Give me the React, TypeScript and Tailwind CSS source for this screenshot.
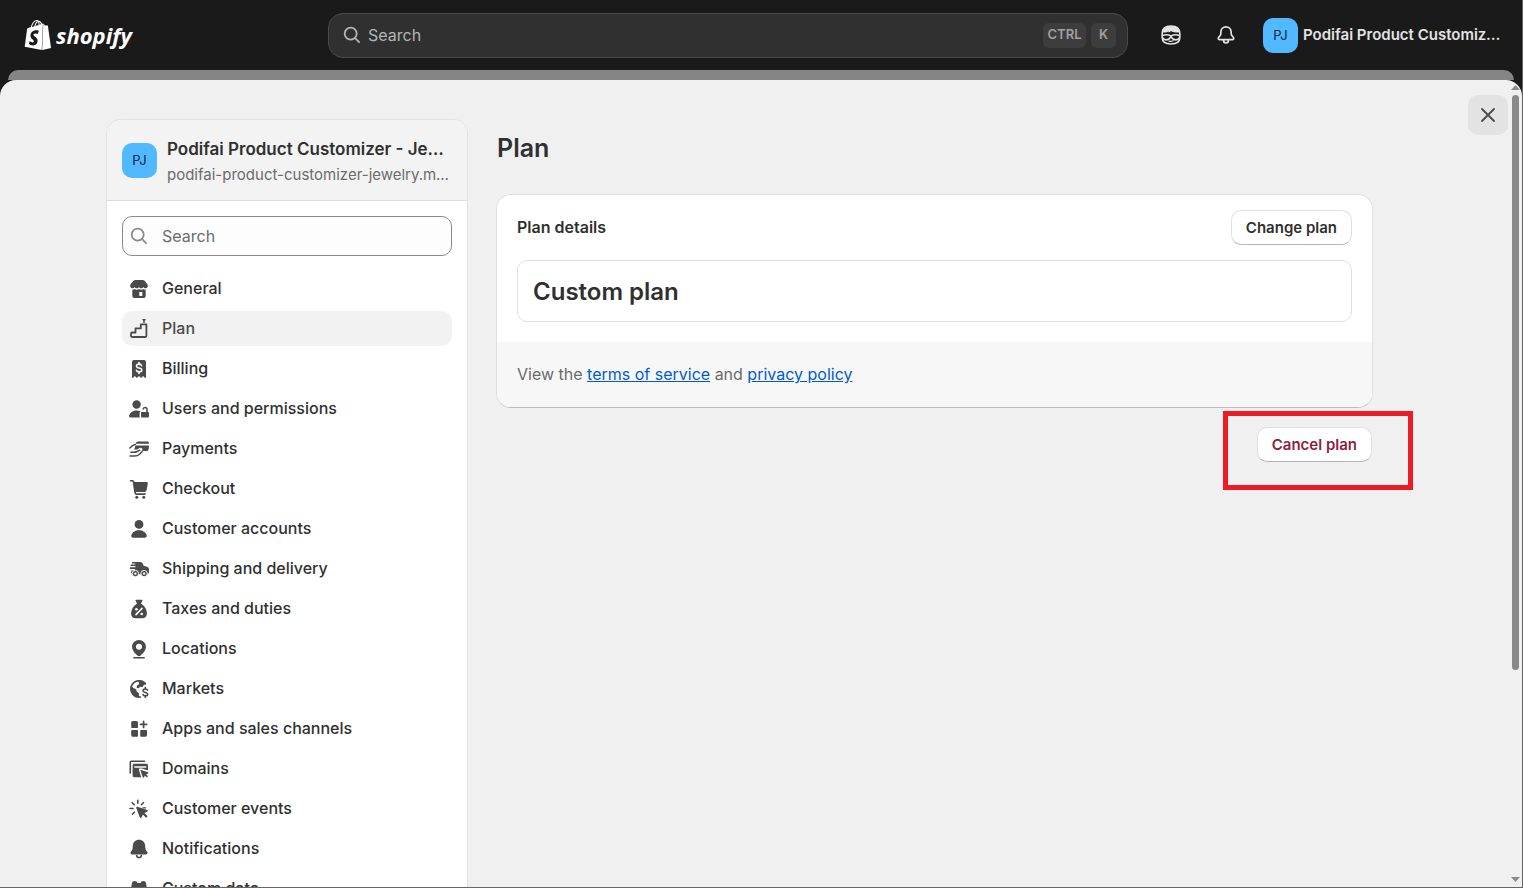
import { FC, ReactNode } from 'react';
import { SiShopify } from 'react-icons/si';

type NavItem = {
  label: string;
  icon: ReactNode;
  active?: boolean;
};

type IconProps = {
  children: ReactNode;
};

const Icon: FC<IconProps> = ({ children }) => (
  <svg
    viewBox="0 0 20 20"
    className="size-5 shrink-0"
    fill="currentColor"
    aria-hidden="true"
  >
    {children}
  </svg>
);

const SearchIcon: FC = () => (
  <Icon>
    <g fill="none" stroke="currentColor" strokeWidth="1.8" strokeLinecap="round">
      <circle cx="8.7" cy="8.7" r="6" />
      <path d="m13.1 13.1 4 4" />
    </g>
  </Icon>
);

const navItems: NavItem[] = [
  {
    label: 'General',
    icon: (
      <Icon>
        <path d="M6.5 1h7c.9 0 1.700.3 2.300 1l2.600 3.300c1.100 1.500.2 3.600-1.600 3.900-1.200.1-2-.5-2.400-1.300-.4.800-1.200 1.400-2.200 1.400S10.400 8.700 10 7.900c-.4.800-1.200 1.400-2.200 1.400S6 8.700 5.600 7.900c-.4.800-1.200 1.400-2.400 1.300-1.800-.3-2.700-2.400-1.600-3.900L4.200 2c.6-.7 1.400-1 2.300-1Z" />
        <path
          fillRule="evenodd"
          d="M3.300 10.700c1 0 1.700-.2 2.300-.6.700.500 1.400.700 2.200.700s1.600-.3 2.200-.7c.6.400 1.400.7 2.200.7s1.500-.2 2.200-.7c.6.400 1.300.6 2.300.6V17a2 2 0 0 1-2 2H5.300a2 2 0 0 1-2-2v-6.300Zm7 2.300v4h3v-4h-3Z"
        />
      </Icon>
    ),
  },
  {
    label: 'Plan',
    active: true,
    icon: (
      <Icon>
        <path
          d="M3.200 18h13c.7 0 1.200-.5 1.200-1.200V5.400h-5.600v4H6.500v4.100H3.200c-.7 0-1.200.5-1.200 1.200v2.100c0 .7.5 1.200 1.200 1.200Z"
          fill="none"
          stroke="currentColor"
          strokeWidth="1.800"
          strokeLinejoin="round"
        />
        <path d="M13 0h4l-1.300 2V4h-1.400V2L13 0Z" />
      </Icon>
    ),
  },
  {
    label: 'Billing',
    icon: (
      <Icon>
        <path d="M5 1h10a2 2 0 0 1 2 2v15.300c0 .6-.7.9-1.100.5L14.200 17l-2.100 1.900L10 17l-2.100 1.900L5.800 17l-1.700 1.800c-.4.4-1.100.1-1.100-.5V3a2 2 0 0 1 2-2Z" />
        <path
          d="M12.600 6.700c-.3-1-1.200-1.600-2.500-1.600-1.500 0-2.600.7-2.600 1.900 0 2.900 5.300 1.200 5.300 4 0 1.200-1.200 1.900-2.700 1.900-1.400 0-2.400-.6-2.700-1.700M10 3.600v1.500m0 7.800v1.500"
          fill="none"
          stroke="#fff"
          strokeWidth="1.600"
          strokeLinecap="round"
        />
      </Icon>
    ),
  },
  {
    label: 'Users and permissions',
    icon: (
      <Icon>
        <circle cx="7.600" cy="5.500" r="4.200" />
        <path d="M7.600 11.500c1.500 0 2.800.3 3.900.8-.6.600-.9 1.300-.9 2.100v4.100H1.500c-.9 0-1.600-.8-1.400-1.700.7-3.200 3.800-5.300 7.500-5.300Z" />
        <path d="M13.200 12.900h5.600c.7 0 1.200.5 1.200 1.200v2.800c0 1-.8 1.700-1.700 1.700h-4.600c-1 0-1.700-.8-1.700-1.700v-2.800c0-.7.5-1.200 1.200-1.200Z" />
        <path
          d="M14.200 9.900c.2-.9 1-1.500 1.900-1.500 1.100 0 1.900.9 1.900 1.900V13"
          fill="none"
          stroke="currentColor"
          strokeWidth="1.500"
          strokeLinecap="round"
        />
      </Icon>
    ),
  },
  {
    label: 'Payments',
    icon: (
      <Icon>
        <path d="M9.300 2.600h9.200c.9 0 1.500.6 1.500 1.500v.7H6.600c.5-1.300 1.400-2.200 2.700-2.200Z" />
        <path d="M6.500 6.400H20l-.4 3.800c-.2 1.200-1 1.900-2.200 1.900h-4.200c.4-.9.4-1.800-.2-2.500-.7-.9-1.800-.9-2.800-.4L8 10.500H5.200l1.300-4.100Z" />
        <path
          d="M.9 9C2.300 7 4.200 5.600 6.300 5.400M1 17.100h4.600c2.200 0 3.600-.6 5.200-2.100l2.400-2.600"
          fill="none"
          stroke="currentColor"
          strokeWidth="1.500"
          strokeLinecap="round"
        />
        <path
          d="M1.800 13.300h2.400c1.600 0 2.700-.2 3.900-.8l2.700-1.300"
          fill="none"
          stroke="currentColor"
          strokeWidth="1.400"
          strokeLinecap="round"
        />
      </Icon>
    ),
  },
  {
    label: 'Checkout',
    icon: (
      <Icon>
        <path d="M1.500 1h1.800c1 0 1.800.7 2 1.600l.1.500h12.200c.8 0 1.400.7 1.200 1.500l-1.100 6.100c-.3 1.400-1.400 2.300-2.800 2.300H6.800l.1.700c.1.400.4.600.8.600h8.400c.5 0 .8.400.8.800s-.3.800-.8.800H7.700c-1.200 0-2.200-.8-2.400-2L3.700 3c0-.3-.2-.4-.5-.4H1.500a.8.8 0 0 1 0-1.600Z" />
        <circle cx="7.800" cy="18.300" r="1.500" />
        <circle cx="14.800" cy="18.300" r="1.500" />
      </Icon>
    ),
  },
  {
    label: 'Customer accounts',
    icon: (
      <Icon>
        <circle cx="10" cy="5.400" r="4.400" />
        <path d="M10 11.300c3.800 0 6.800 2 7.700 5 .4 1.300-.6 2.500-1.900 2.500H4.200c-1.300 0-2.300-1.200-1.900-2.500.9-3 3.900-5 7.700-5Z" />
      </Icon>
    ),
  },
  {
    label: 'Shipping and delivery',
    icon: (
      <Icon>
        <path d="M3 3h8.200c1.300 0 2.400.8 2.800 2l.6 1.800 3.400 1c1.200.4 2 1.500 2 2.800v2.300c0 1.200-.8 2.100-2 2.300H3.700c-1-.1-1.500-.9-1.500-1.800v-2h3.600v-1.500H.9V8.300h5.500V6.900H1.700V5.500h4.600V4.500H3V3Z" />
        <g fill="currentColor" stroke="#fff" strokeWidth="1">
          <circle cx="6.400" cy="14.600" r="3.200" />
          <circle cx="15.100" cy="14.600" r="3.200" />
        </g>
        <circle cx="6.400" cy="14.600" r="1.200" fill="#fff" />
        <circle cx="15.100" cy="14.600" r="1.200" fill="#fff" />
      </Icon>
    ),
  },
  {
    label: 'Taxes and duties',
    icon: (
      <Icon>
        <path d="M7.300.7h5.400c.7 0 1.100.8.7 1.400l-1.200 1.800v1.600H7.800V3.900L6.600 2.100C6.200 1.500 6.600.7 7.300.7Z" />
        <path d="M7.500 5h5c3.200 2 5.400 5.600 5.400 9.200 0 3.300-1.700 5.100-4.800 5.100H6.900c-3.100 0-4.800-1.800-4.800-5.100C2.100 10.600 4.300 7 7.500 5Z" />
        <path
          d="m7 15.600 6-6.200"
          fill="none"
          stroke="#fff"
          strokeWidth="1.600"
          strokeLinecap="round"
        />
        <circle cx="7.400" cy="10.300" r="1.300" fill="#fff" />
        <circle cx="12.700" cy="15" r="1.300" fill="#fff" />
      </Icon>
    ),
  },
  {
    label: 'Locations',
    icon: (
      <Icon>
        <path
          fillRule="evenodd"
          d="M10 1c3.900 0 6.900 3 6.900 6.700 0 3.900-2.800 6.300-5.200 8.800-1 1-2.400 1-3.400 0-2.400-2.500-5.200-4.900-5.200-8.800C3.100 4 6.100 1 10 1Zm0 9.800a3 3 0 1 0 0-6 3 3 0 0 0 0 6Z"
        />
        <path
          d="M4.800 18.700h10.400"
          stroke="currentColor"
          strokeWidth="1.500"
          strokeLinecap="round"
        />
      </Icon>
    ),
  },
  {
    label: 'Markets',
    icon: (
      <Icon>
        <path
          d="M16.400 4.600A8.200 8.200 0 1 0 11.500 18"
          fill="none"
          stroke="currentColor"
          strokeWidth="1.600"
          strokeLinecap="round"
        />
        <path d="M2 6.500 4.300 9l2.900 1.200.5 2.300 2.400 1.900-.3 4.200A9 9 0 0 1 2 6.500Z" />
        <path d="m9.200 1.300 4.300.5 3.500 3.400-2 .6-1.600 2.500-2.200-.5-1.600 1.500-1.900-.4.2-2.200 2.300-1.700-1-3.700Z" />
        <path
          d="M18.500 11.300c-.3-.9-1-1.300-2.200-1.300-1.300 0-2.200.7-2.200 1.700 0 2.500 4.600 1.100 4.600 3.500 0 1.100-1 1.700-2.400 1.700-1.200 0-2-.4-2.300-1.400M16.300 8.500V10m0 6.900v1.500"
          fill="none"
          stroke="currentColor"
          strokeWidth="1.600"
          strokeLinecap="round"
        />
      </Icon>
    ),
  },
  {
    label: 'Apps and sales channels',
    icon: (
      <Icon>
        <path d="M4 2h3.200C8.200 2 9 2.800 9 3.800v4.400c0 .4-.3.700-.7.700H2.900c-.4 0-.7-.3-.7-.7V3.800C2.200 2.800 3 2 4 2Z" />
        <path d="M2.900 11h5.400c.4 0 .7.300.7.700v5.400c0 .4-.3.700-.7.700H4c-1 0-1.800-.8-1.800-1.800v-4.300c0-.4.3-.7.7-.7Z" />
        <path d="M11.900 11h5.400c.4 0 .7.300.7.700V16c0 1-.8 1.800-1.800 1.800h-4.300c-.4 0-.7-.3-.7-.7v-5.400c0-.4.3-.7.7-.7Z" />
        <path
          d="M14.600 2.400v6M11.600 5.400h6"
          stroke="currentColor"
          strokeWidth="1.700"
          strokeLinecap="round"
        />
      </Icon>
    ),
  },
  {
    label: 'Domains',
    icon: (
      <Icon>
        <path
          d="M1.300 14V3.200c0-.6.3-.9.900-.9h13.300"
          fill="none"
          stroke="currentColor"
          strokeWidth="1.600"
          strokeLinecap="round"
        />
        <path
          fillRule="evenodd"
          d="M5.300 4.700h12c1 0 1.700.8 1.700 1.700v5.200l-7-2.300c-1.300-.4-2.400.7-2 2l2.300 6.900H5.300c-1 0-1.700-.8-1.700-1.700V6.400c0-1 .8-1.700 1.700-1.700Zm0 2.600v1.500h12V7.300h-12Z"
        />
        <path d="m12.100 10.900 6.900 2.400c.6.200.6 1 0 1.200l-1.900.8 1.900 1.900-1.200 1.200-1.900-1.900-.9 1.900c-.2.600-1 .5-1.200-.1l-2.400-6.700c-.2-.4.200-.8.700-.7Z" />
      </Icon>
    ),
  },
  {
    label: 'Customer events',
    icon: (
      <Icon>
        <path
          d="M8.800 1.200v3M3.200 3.700l2 2M1 9.500h3M3.400 15.200l2-2M14.400 3.700l-2 2"
          stroke="currentColor"
          strokeWidth="1.600"
          strokeLinecap="round"
        />
        <path d="m8.500 7.700 9.700 3.200c.8.300.8 1.400.1 1.700l-2.800 1.400 3.200 3.200-1.600 1.600-3.200-3.200-1.400 2.800c-.4.800-1.500.7-1.700-.1L7.300 8.900c-.3-.7.4-1.400 1.200-1.200Z" />
        <path
          d="M14 8.900h2.500"
          stroke="currentColor"
          strokeWidth="1.400"
          strokeLinecap="round"
        />
      </Icon>
    ),
  },
  {
    label: 'Notifications',
    icon: (
      <Icon>
        <path d="M10 .8c3.600 0 6 2.600 6.200 6l.2 2.800c.1.700.3 1.300.8 1.800l.9 1.100c1 1.200.2 3.100-1.400 3.100H3.300c-1.600 0-2.400-1.900-1.400-3.100l.9-1.100c.5-.5.7-1.100.8-1.800l.2-2.800c.2-3.400 2.600-6 6.200-6Z" />
        <path
          d="M7.600 16c0 1.500 1 2.600 2.400 2.600s2.400-1.100 2.400-2.600"
          fill="none"
          stroke="currentColor"
          strokeWidth="1.500"
        />
      </Icon>
    ),
  },
  {
    label: 'Custom data',
    icon: (
      <Icon>
        <path d="M5.500 2c1.600 0 2.700.7 3 2h3c.3-1.300 1.400-2 3-2 1.400 0 2.300.8 2.500 2l1.500 8.500a4 4 0 1 1-7.800 1H9.300a4 4 0 1 1-7.800-1L3 4c.2-1.200 1.100-2 2.500-2Z" />
      </Icon>
    ),
  },
];

const Avatar: FC = () => (
  <span className="flex size-[35px] shrink-0 items-center justify-center rounded-[10px] bg-[#51b9ff] pt-0.5 text-[13px] text-[#10263d]">
    PJ
  </span>
);

const Header: FC = () => (
  <header className="flex h-[70px] shrink-0 items-center">
    <a
      href="#"
      className="flex w-[328px] shrink-0 items-center gap-[3px] pl-[23px] text-white"
    >
      <SiShopify className="size-[30px]" aria-hidden="true" />
      <span className="font-['Open_Sans',sans-serif] text-[22px] font-bold italic">
        shopify
      </span>
    </a>
    <div className="flex h-[45px] max-w-[800px] flex-1 items-center rounded-[15px] border border-[#4a4a4a] bg-[#303030] pr-[11px] pl-[13px] text-[#b5b5b5]">
      <SearchIcon />
      <input
        type="search"
        aria-label="Search the store"
        placeholder="Search"
        className="ml-1.5 min-w-0 flex-1 bg-transparent text-base outline-none placeholder:text-[#b5b5b5]"
      />
      <kbd className="mr-[5px] flex h-[25px] w-[43px] items-center justify-center rounded-md bg-[#3d3d3d] font-[Inter,sans-serif] text-[13px] font-semibold text-[#a0a0a0]">
        CTRL
      </kbd>
      <kbd className="flex size-[25px] items-center justify-center rounded-md bg-[#3d3d3d] font-[Inter,sans-serif] text-[13px] font-semibold text-[#a0a0a0]">
        K
      </kbd>
    </div>
    <div className="ml-auto flex items-center pr-[17px] text-[#e3e3e3]">
      <button type="button" aria-label="Sidekick" className="mr-[35px]">
        <svg viewBox="0 0 20 20" className="size-5" fill="none" aria-hidden="true">
          <path
            d="M1.200 8.500C1.200 3.700 4.300 1 10 1s8.800 2.700 8.800 7.500v4.300c0 4-2.800 6.200-8.800 6.200s-8.800-2.200-8.800-6.200V8.500Z"
            stroke="currentColor"
            strokeWidth="1.600"
          />
          <path
            d="M1.200 7.500C1.800 3.200 4.900 1 10 1c5.200 0 8.400 2.200 8.800 6.500-3.800.1-7-.4-9-1.500-.4.700-1.200 1.200-2.100 1.400l-.2-1c-1.600 1-3.600 1.300-6.300 1.100Z"
            fill="currentColor"
          />
          <path
            d="M1.500 10.500c2.800-1.200 6-1 8.500.5 2.500-1.500 5.700-1.700 8.500-.5"
            stroke="currentColor"
            strokeWidth="1.500"
          />
          <path
            d="M1.500 12.500c1.500 3.400 6.300 3 8.500-.6 2.200 3.600 7 4 8.500.6"
            stroke="currentColor"
            strokeWidth="1.700"
          />
          <path
            d="M8 16.100c1.400.5 2.900.4 4.100-.3"
            stroke="currentColor"
            strokeWidth="1.300"
            strokeLinecap="round"
          />
        </svg>
      </button>
      <button type="button" aria-label="Notifications" className="mr-[27px]">
        <svg viewBox="0 0 20 20" className="size-5" fill="none" aria-hidden="true">
          <path
            d="M10 1.800c-3 0-5 2.200-5.100 5l-.1 1.900c0 .8-.3 1.400-.8 2l-1.300 1.500c-.9 1-.3 2.500 1.100 2.500h12.400c1.400 0 2-1.500 1.100-2.500L16 10.700c-.5-.6-.8-1.200-.8-2l-.1-1.900c-.1-2.800-2.100-5-5.100-5ZM7.500 15c0 2 1 3 2.500 3s2.500-1 2.500-3"
            stroke="currentColor"
            strokeWidth="1.700"
            strokeLinejoin="round"
          />
        </svg>
      </button>
      <button type="button" className="flex items-center gap-[5px]">
        <Avatar />
        <span className="w-[202px] truncate text-left text-[15px] font-semibold">
          Podifai Product Customizer - Jewelry
        </span>
      </button>
    </div>
  </header>
);

const Sidebar: FC = () => (
  <aside className="w-[362px] shrink-0 overflow-hidden rounded-t-[15px] border border-b-0 border-[#e3e3e3] bg-white">
    <div className="flex h-[81px] items-center gap-2.5 border-b border-[#dedede] bg-[#f3f3f3] px-[15px]">
      <Avatar />
      <div className="min-w-0 flex-1 pt-1">
        <p className="truncate text-[17px] leading-[25px] font-semibold">
          Podifai Product Customizer - Jewelry
        </p>
        <p className="truncate text-[15px] leading-[25px] text-[#6b6b6b]">
          podifai-product-customizer-jewelry.myshopify.com
        </p>
      </div>
    </div>
    <div className="p-[15px]">
      <div className="flex h-10 items-center gap-[13px] rounded-[10px] border border-[#8a8a8a] bg-[#fdfdfd] px-1.5 text-[#8a8a8a]">
        <SearchIcon />
        <input
          type="search"
          aria-label="Search settings"
          placeholder="Search"
          className="min-w-0 flex-1 bg-transparent text-base outline-none placeholder:text-[#6b6b6b]"
        />
      </div>
      <nav className="mt-[15px] flex flex-col gap-[5px]">
        {navItems.map(({ label, icon, active }) => (
          <a
            key={label}
            href="#"
            aria-current={active ? 'page' : undefined}
            className={
              active
                ? 'flex h-[35px] items-center gap-[13px] rounded-[10px] bg-[#f2f2f2] px-[7px] text-base font-medium text-[#4a4a4a]'
                : 'flex h-[35px] items-center gap-[13px] rounded-[10px] px-[7px] text-base font-medium'
            }
          >
            <span className="text-[#4a4a4a]">{icon}</span>
            <span className="pb-0.5">{label}</span>
          </a>
        ))}
      </nav>
    </div>
  </aside>
);

const PlanPage: FC = () => (
  <main className="min-w-0 flex-1">
    <h1 className="mt-3 pl-px text-[25px] leading-[35px] font-semibold">Plan</h1>
    <section className="mt-7 overflow-hidden rounded-[15px] border border-[#e0e0e0] border-b-[#bdbdbd] bg-white">
      <div className="px-5 pt-[15px] pb-5">
        <div className="flex items-center justify-between">
          <h2 className="pb-0.5 text-base font-semibold">Plan details</h2>
          <button
            type="button"
            className="h-[35px] rounded-[10px] border border-[#e0e0e0] border-b-[#b5b5b5] bg-white px-3.5 pt-0.5 text-[15px] font-semibold"
          >
            Change plan
          </button>
        </div>
        <div className="mt-[15px] flex h-[62px] items-center rounded-[10px] border border-[#e0e0e0] px-[15px]">
          <p className="pt-0.5 text-2xl font-semibold">Custom plan</p>
        </div>
      </div>
      <p className="bg-[#f7f7f7] px-5 pt-5 pb-[21px] text-base text-[#6b6b6b]">
        View the{' '}
        <a href="#" className="text-[#005bd3] underline">
          terms of service
        </a>{' '}
        and{' '}
        <a href="#" className="text-[#005bd3] underline">
          privacy policy
        </a>
      </p>
    </section>
    <div className="mt-[19px] flex justify-end pr-px">
      <div className="relative">
        <button
          type="button"
          className="h-[35px] rounded-[10px] border border-[#e0e0e0] border-b-[#b5b5b5] bg-white px-3.5 pt-0.5 text-[15px] font-semibold text-[#8e1f3b]"
        >
          Cancel plan
        </button>
        <div className="pointer-events-none absolute -top-4 -right-[41px] -bottom-7 -left-[34px] border-[5px] border-[#ed1c24]" />
      </div>
    </div>
  </main>
);

const Scrollbar: FC = () => (
  <div className="flex w-3.5 shrink-0 flex-col items-center py-[5px]" aria-hidden="true">
    <svg viewBox="0 0 9 5" className="h-[5px] w-[9px]" fill="#8a8a8a">
      <path d="M4.500 0 9 5H0Z" />
    </svg>
    <div className="my-[5px] flex-1">
      <div className="h-[74%] w-[7px] rounded-full bg-[#8a8a8a]" />
    </div>
    <svg viewBox="0 0 9 5" className="h-[5px] w-[9px]" fill="#8a8a8a">
      <path d="M0 0h9L4.500 5Z" />
    </svg>
  </div>
);

const App: FC = () => (
  <div className="flex h-screen flex-col overflow-hidden border-r border-b border-[#666] bg-[#1a1a1a] font-[Inter,sans-serif] text-[#303030]">
    <Header />
    <div className="mx-2 h-2.5 shrink-0 rounded-t-[14px] bg-[#858585]" />
    <div className="relative flex min-h-0 flex-1 overflow-hidden rounded-t-2xl bg-[#f0f0f0]">
      <div className="flex min-w-0 flex-1 gap-7 overflow-hidden pt-[39px] pr-[135px] pl-[106px]">
        <Sidebar />
        <PlanPage />
      </div>
      <button
        type="button"
        aria-label="Close"
        className="absolute top-[15px] right-3.5 flex size-10 items-center justify-center rounded-[10px] bg-[#e3e3e3] text-[#4a4a4a]"
      >
        <svg viewBox="0 0 14 14" className="size-3.5" fill="none" aria-hidden="true">
          <path
            d="m1 1 12 12M13 1 1 13"
            stroke="currentColor"
            strokeWidth="1.800"
            strokeLinecap="round"
          />
        </svg>
      </button>
      <Scrollbar />
    </div>
  </div>
);

export default App;
